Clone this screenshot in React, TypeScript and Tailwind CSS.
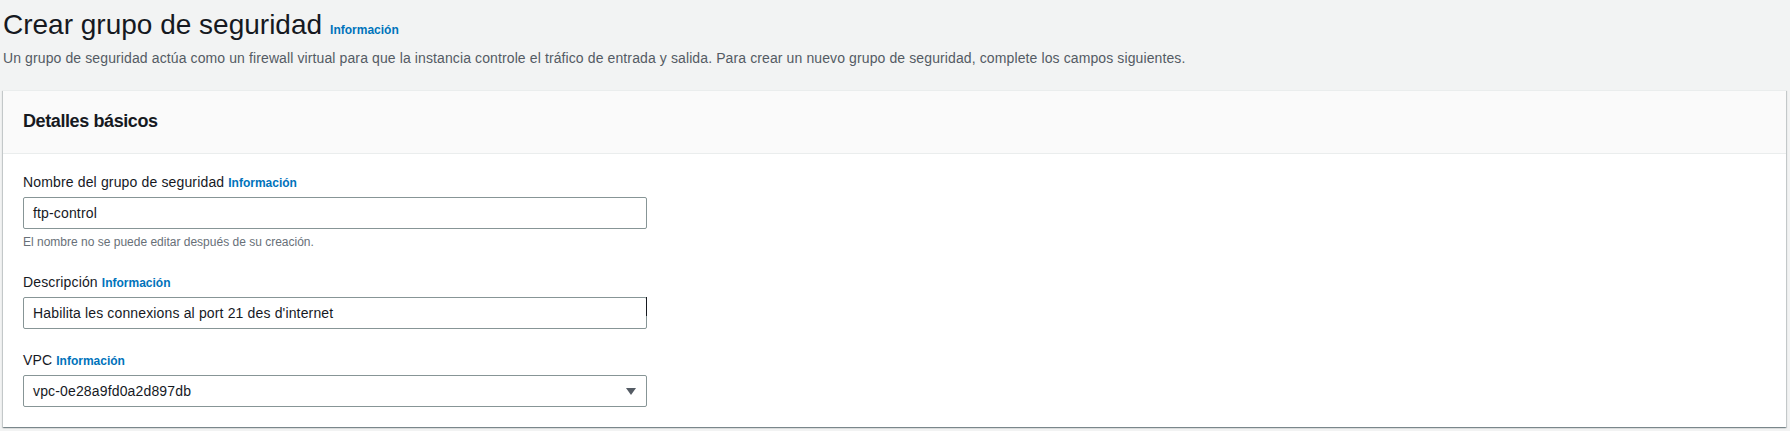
import React from "react";

const InfoLink: React.FC<{ className?: string }> = ({ className = "" }) => (
  <a className={`text-[12px] font-bold leading-[16px] tracking-normal text-[#0073bb] cursor-pointer ${className}`}>
    Información
  </a>
);

interface FieldProps {
  label: string;
  value: string;
  help?: string;
  select?: boolean;
  cursorMark?: boolean;
}

const Field: React.FC<FieldProps> = ({ label, value, help, select, cursorMark }) => (
  <div className="flex flex-col">
    <div className="flex items-baseline text-[14px] leading-[20px] tracking-[0.15px] text-[#16191f]">
      <span>{label}</span>
      <InfoLink className="ml-[4px]" />
    </div>
    <div className="relative mt-[5px] flex h-[32px] w-[624px] items-center justify-between rounded-[2px] border border-[#879596] bg-white pl-[9px] pr-[10px] text-[14px] tracking-[0.15px] text-[#16191f]">
      <span>{value}</span>
      {select && (
        <svg width="10" height="7" viewBox="0 0 10 7">
          <path d="M0 0 H10 L5 7 Z" fill="#545b64" />
        </svg>
      )}
      {cursorMark && (
        <span className="absolute right-[-1px] top-[-1px] h-[19px] w-px bg-[#16191f]" />
      )}
    </div>
    {help && (
      <p className="mt-[4px] text-[12px] leading-[18px] text-[#687078]">{help}</p>
    )}
  </div>
);

export default function App() {
  return (
    <div className="min-h-[431px] w-full bg-[#f2f3f3] pl-[3px] pr-[4px] font-['Liberation_Sans',Arial,sans-serif]">
      <div className="flex items-baseline pt-[7px]">
        <h1 className="text-[28px] font-normal leading-[36px] text-[#16191f]">
          Crear grupo de seguridad
        </h1>
        <InfoLink className="ml-[8px]" />
      </div>
      <p className="mt-[5px] text-[14px] leading-[20px] tracking-[0.11px] text-[#545b64]">
        Un grupo de seguridad actúa como un firewall virtual para que la instancia controle el tráfico de entrada y salida. Para crear un nuevo grupo de seguridad, complete los campos siguientes.
      </p>

      <div className="mt-[22px] border-t border-[#eaeded] bg-white shadow-[0_1px_1px_0_rgba(0,28,36,0.3),1px_1px_1px_0_rgba(0,28,36,0.15),-1px_1px_1px_0_rgba(0,28,36,0.15)]">
        <div className="border-b border-[#eaeded] bg-[#fafafa] px-[20px] pb-[21px] pt-[19px]">
          <h2 className="text-[18px] font-bold leading-[22px] tracking-[-0.4px] text-[#16191f]">
            Detalles básicos
          </h2>
        </div>
        <div className="flex flex-col gap-[21px] px-[20px] pb-[20px] pt-[18px]">
          <Field
            label="Nombre del grupo de seguridad"
            value="ftp-control"
            help="El nombre no se puede editar después de su creación."
          />
          <Field
            label="Descripción"
            value="Habilita les connexions al port 21 des d'internet"
            cursorMark
          />
          <Field label="VPC" value="vpc-0e28a9fd0a2d897db" select />
        </div>
      </div>
    </div>
  );
}
